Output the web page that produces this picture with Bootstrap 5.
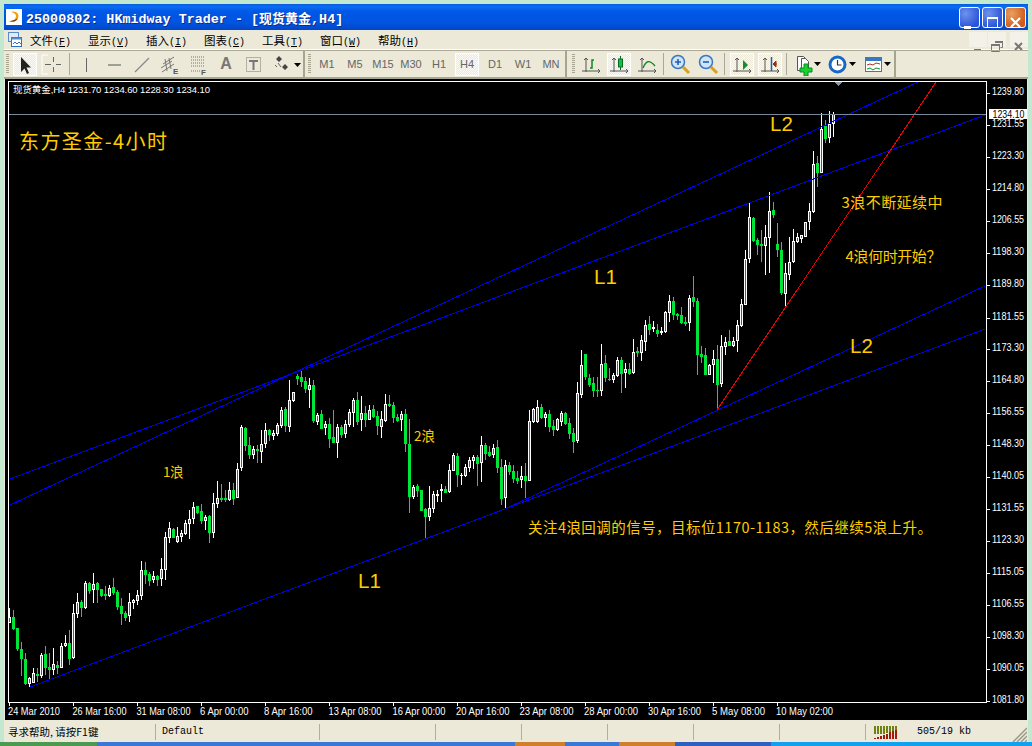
<!DOCTYPE html>
<html lang="zh">
<head>
    <meta charset="UTF-8">
    <meta name="viewport" content="width=device-width, initial-scale=1.0">
    <title>HKmidway Trader</title>
    <link href="https://cdn.jsdelivr.net/npm/bootstrap@5.3.0/dist/css/bootstrap.min.css" rel="stylesheet">
    <style>
        html, body { height: 746px; overflow: hidden; }
        body { background: #c3e8d0; font-family: "Noto Sans CJK SC", "Liberation Sans", sans-serif; color: #000; }
        .app-window { width: 1024px; height: 738px; margin: 4px 0 0 4px; background: #ece9d8; }
        .title-row { height: 26px; flex: none; padding: 0 2px; color: #fff; background: linear-gradient(#0a5ad8 0, #0a6cf4 10%, #0058e6 28%, #0054e0 72%, #0047c8 100%); }
        .title-text { margin-left: 4px; font: bold 13.4px "Liberation Mono", monospace; text-shadow: 1px 1px 0 #0a2f90; white-space: pre; }
        .title-text span { font: bold 13px "Noto Sans CJK SC", sans-serif; }
        .xp-btn { width: 21px; height: 21px; margin-left: 2px; border: 1px solid #fff; border-radius: 3px; background: radial-gradient(circle at 30% 30%, #6f92ec, #2a55d8 75%); }
        .xp-close { background: radial-gradient(circle at 30% 30%, #e8a060, #d05a18 75%); }
        .menu-row { height: 20px; flex: none; border-bottom: 1px solid #fff; }
        .menu-row .nav-link { padding: 0 8px; font-size: 11.5px; line-height: 20px; color: #000; width: 58px; white-space: nowrap; }
        .menu-row .nav-link b { font: 10px "Liberation Mono", monospace; }
        .mdi-btn { width: 18px; height: 15px; margin-left: 1px; background: #f4f2e8; }
        .tool-row { height: 29px; flex: none; padding-top: 1px; border-bottom: 2px solid #a6a694; box-shadow: inset 0 1px 0 #aca899; }
        .tool-grip { width: 3px; height: 20px; margin: 0 2px 0 3px; background: repeating-linear-gradient(#a8a690 0 1px, #ece9d8 1px 2px); }
        .tool-grip.first { margin-left: 2px; }
        .tool-grip.third { margin-left: 5px; }
        .tool-btn { width: 24px; height: 23px; margin: 0 2px; padding: 0; border: 0; border-radius: 0; font: 11px "Liberation Sans", sans-serif; color: #666; line-height: 23px; }
        .tool-btn svg { display: block; margin: 0 auto; }
        .tool-wide { width: 31px; }
        .tool-gap { margin-left: 3px; }
        .tool-on { background: #f6f5ee; box-shadow: inset 0 0 0 1px #fff; background-image: repeating-conic-gradient(#ece9d8 0 25%, #fbfaf5 0 50%); background-size: 2px 2px; }
        .tool-sep { width: 1px; height: 22px; margin: 0 2px; background: #aca899; }
        .tool-end { width: 2px; height: 26px; background: #a6a68f; }
        .tool-ltr { font: bold 16px "Liberation Sans", sans-serif; color: #777; }
        .chart-frame { flex: 1 1 auto; margin: 0 1px; background: #000; min-height: 0; }
        .chart-frame svg { display: block; }
        .chart-frame text { font-family: "Liberation Sans", sans-serif; fill: #fff; }
        .chart-frame text.note-text, .chart-frame tspan.note-text { font-family: "Noto Sans CJK SC", sans-serif; fill: #ffcc00; }
        .chart-frame tspan.info-cjk { font-family: "Noto Sans CJK SC", sans-serif; }
        .chart-frame text.big-label { fill: #ffcc00; font-size: 20.5px; }
        .tick-text { font-size: 10.5px; }
        .status-row { height: 22px; flex: none; padding-top: 2px; font-size: 10.5px; }
        .status-cell { height: 16px; line-height: 16px; border-right: 1px solid #aeb09c; padding-left: 4px; white-space: nowrap; flex: none; }
        .status-mono { font: 10px/16px "Liberation Mono", monospace; }
        .strip-row { height: 4px; position: fixed; left: 0; right: 0; bottom: 0; background: #3a78d8; }
        .strip-row div { height: 4px; flex: none; }
    </style>
</head>
<body>
    <div class="app-window d-flex flex-column">

        <!-- title bar -->
        <div class="title-row d-flex align-items-center">
            <svg width="16" height="16" viewBox="0 0 16 16">
                <rect width="16" height="16" fill="#fff"/>
                <path d="M4 3C10 1 14 5 12 9 11 12 7 14 3 12 7 12 10 10 10 7 10 5 7 3 4 3Z" fill="#f0a010"/>
                <path d="M3 12C7 14 11 12 12 9 11 10 7 12 3 12Z" fill="#704010"/>
            </svg>
            <div class="title-text">25000802: HKmidway Trader - [<span>现货黄金</span>,H4]</div>
            <div class="ms-auto d-flex">
                <div class="xp-btn"><svg width="19" height="19"><rect x="4" y="13" width="7" height="3" fill="#fff"/></svg></div>
                <div class="xp-btn"><svg width="19" height="19"><path d="M4.5 5.5h10v9h-10z" fill="none" stroke="#fff"/><rect x="4" y="4" width="11" height="2" fill="#fff"/></svg></div>
                <div class="xp-btn xp-close"><svg width="19" height="19"><path d="M5 5l9 9M14 5l-9 9" stroke="#fff" stroke-width="2.2"/></svg></div>
            </div>
        </div>

        <!-- menu -->
        <div class="menu-row d-flex align-items-center">
            <svg class="ms-1 flex-none" width="14" height="15" viewBox="0 0 14 15">
                <rect x=".5" y=".5" width="10" height="9" fill="#dfe9f8" stroke="#5a8ac8"/>
                <rect x="3.5" y="5.5" width="10" height="9" fill="#fff" stroke="#3070c0"/>
                <rect x="3.5" y="5.5" width="10" height="2" fill="#5a8ac8"/>
                <path d="M5 12l2-2 2 2 2-2 2 2" fill="none" stroke="#3070c0"/>
            </svg>
            <ul class="nav flex-nowrap">
                <li class="nav-item"><a class="nav-link" href="#">文件<b>(<u>F</u>)</b></a></li>
                <li class="nav-item"><a class="nav-link" href="#">显示<b>(<u>V</u>)</b></a></li>
                <li class="nav-item"><a class="nav-link" href="#">插入<b>(<u>I</u>)</b></a></li>
                <li class="nav-item"><a class="nav-link" href="#">图表<b>(<u>C</u>)</b></a></li>
                <li class="nav-item"><a class="nav-link" href="#">工具<b>(<u>T</u>)</b></a></li>
                <li class="nav-item"><a class="nav-link" href="#">窗口<b>(<u>W</u>)</b></a></li>
                <li class="nav-item"><a class="nav-link" href="#">帮助<b>(<u>H</u>)</b></a></li>
            </ul>
            <div class="ms-auto d-flex">
                <div class="mdi-btn"><svg width="18" height="15"><rect x="5" y="10" width="7" height="2" fill="#777"/></svg></div>
                <div class="mdi-btn"><svg width="18" height="15"><path d="M7.5 2.5h7v6h-2M3.500 5.500h8v7h-8z" fill="none" stroke="#777"/><path d="M7 3h8M3 6h9" stroke="#777" stroke-width="2"/></svg></div>
                <div class="mdi-btn ms-1"><svg width="18" height="15"><path d="M5 4l7 7M12 4l-7 7" stroke="#777" stroke-width="2"/></svg></div>
            </div>
        </div>

        <!-- toolbars -->
        <div class="tool-row d-flex align-items-center">
            <div class="tool-grip first"></div>
            <button class="btn tool-btn tool-on"><svg width="24" height="23"><path d="M8 4V19L11.500 15.500 14 21 16 20 13.500 14.500H18Z" fill="#222"/></svg></button>
            <button class="btn tool-btn"><svg width="24" height="23"><path d="M1 2H7M1 2V21M1 21H7" fill="none" stroke="#fff"/><path d="M12.500 4V9M12.500 14V19M4 11.500H10M15 11.500H20" stroke="#666"/></svg></button>
            <div class="tool-sep"></div>
            <button class="btn tool-btn"><svg width="24" height="23"><path d="M12.500 5V19" stroke="#666"/></svg></button>
            <button class="btn tool-btn"><svg width="24" height="23"><path d="M6 12H19" stroke="#555"/></svg></button>
            <button class="btn tool-btn"><svg width="24" height="23"><path d="M5 19L19 5" stroke="#888" stroke-width="1.200"/></svg></button>
            <button class="btn tool-btn"><svg width="24" height="23"><path d="M3 15L14 8M4 19L16 11M5 11L16 4M7 6L9 18M11 5L13 16" stroke="#777" fill="none"/><text x="15" y="21" font-size="8" font-weight="bold" fill="#555" font-family="Liberation Sans">E</text></svg></button>
            <button class="btn tool-btn"><svg width="24" height="23"><path d="M5 4H18M5 7H18M5 10H18M5 13H18M5 18H14" stroke="#777" stroke-dasharray="1 1"/><text x="15" y="22" font-size="8" font-weight="bold" fill="#555" font-family="Liberation Sans">F</text></svg></button>
            <button class="btn tool-btn tool-ltr">A</button>
            <button class="btn tool-btn"><svg width="24" height="23"><path d="M4.500 4.500h14v14h-14z" fill="none" stroke="#777" stroke-dasharray="1 1"/><path d="M7 7h9v2h-3.500V17h-2V9H7z" fill="#777"/></svg></button>
            <button class="btn tool-btn tool-wide"><svg width="31" height="23"><path d="M6 6l3-3 3 3-3 3zM12 14l3-3 3 3-3 3z" fill="#444"/><path d="M8 10l3 4M5 12l2 2" stroke="#666"/><path d="M24 10h7l-3.500 4z" fill="#000"/></svg></button>
            <div class="tool-end"></div>

            <div class="tool-grip"></div>
            <button class="btn tool-btn">M1</button>
            <button class="btn tool-btn">M5</button>
            <button class="btn tool-btn">M15</button>
            <button class="btn tool-btn">M30</button>
            <button class="btn tool-btn">H1</button>
            <button class="btn tool-btn tool-on">H4</button>
            <button class="btn tool-btn">D1</button>
            <button class="btn tool-btn">W1</button>
            <button class="btn tool-btn">MN</button>
            <div class="tool-end"></div>

            <div class="tool-grip third"></div>
            <button class="btn tool-btn"><svg width="24" height="23"><path d="M7 5V19M3 18H21M5 7l2-2 2 2M19 16l2 2-2 2" fill="none" stroke="#555"/><path d="M11 15h2V7h2" fill="none" stroke="#0a8a20" stroke-width="1.500"/></svg></button>
            <button class="btn tool-btn tool-on"><svg width="24" height="23"><path d="M7 5V19M3 18H21M5 7l2-2 2 2M19 16l2 2-2 2" fill="none" stroke="#555"/><path d="M13.500 3V17" stroke="#0a6a20"/><rect x="11.500" y="6" width="4" height="8" fill="#10c040" stroke="#0a6a20"/></svg></button>
            <button class="btn tool-btn"><svg width="24" height="23"><path d="M7 5V19M3 18H21M5 7l2-2 2 2M19 16l2 2-2 2" fill="none" stroke="#555"/><path d="M8 15C11 8 14 6 20 13" fill="none" stroke="#0a8a20" stroke-width="1.300"/></svg></button>
            <div class="tool-sep"></div>
            <button class="btn tool-btn"><svg width="24" height="23"><circle cx="10" cy="9" r="6.500" fill="#cfe4f8" stroke="#3878c0" stroke-width="1.500"/><path d="M7 9h6M10 6v6" stroke="#2060b0" stroke-width="1.600"/><path d="M15 14l6 6" stroke="#d8a020" stroke-width="3"/></svg></button>
            <button class="btn tool-btn"><svg width="24" height="23"><circle cx="10" cy="9" r="6.500" fill="#cfe4f8" stroke="#3878c0" stroke-width="1.500"/><path d="M7 9h6" stroke="#2060b0" stroke-width="1.600"/><path d="M15 14l6 6" stroke="#d8a020" stroke-width="3"/></svg></button>
            <div class="tool-sep"></div>
            <button class="btn tool-btn tool-on tool-gap"><svg width="24" height="23"><path d="M7 5V19M3 18H21M5 7l2-2 2 2M19 16l2 2-2 2" fill="none" stroke="#555"/><path d="M13 7l5 5-5 5z" fill="#109030"/></svg></button>
            <button class="btn tool-btn tool-on"><svg width="24" height="23"><path d="M7 5V19M3 18H21M5 7l2-2 2 2M19 16l2 2-2 2" fill="none" stroke="#555"/><path d="M13.500 4V18" stroke="#1060b0" stroke-width="1.500"/><path d="M15 11h4M15 11l3-3v6z" fill="#a03010" stroke="#a03010"/></svg></button>
            <div class="tool-sep"></div>
            <button class="btn tool-btn tool-wide"><svg width="31" height="23"><path d="M6.500 3.500h6l3 3v11h-9z" fill="#fff" stroke="#555"/><path d="M10.500 5.500h4l3 3v7h-7z" fill="#fff" stroke="#555"/><path d="M13 11h4v4h4v4h-4v4h-4v-4H9v-4h4z" fill="#18d030" stroke="#0a8a20"/><path d="M23 9h7l-3.500 4z" fill="#000"/></svg></button>
            <button class="btn tool-btn tool-wide"><svg width="31" height="23"><circle cx="11.500" cy="11.500" r="7.500" fill="#fff" stroke="#1868c8" stroke-width="3"/><path d="M11.500 7v5h4" fill="none" stroke="#333" stroke-width="1.200"/><path d="M23 9h7l-3.500 4z" fill="#000"/></svg></button>
            <button class="btn tool-btn tool-wide"><svg width="31" height="23"><rect x="4.500" y="4.500" width="16" height="14" fill="#fff" stroke="#3878c0"/><rect x="5" y="5" width="15" height="3" fill="#3878c0"/><path d="M6 12l3-1 3 1 3-2 4 1" fill="none" stroke="#b03020"/><path d="M6 16l3-1 3 2 3-2 4 1" fill="none" stroke="#109030"/><path d="M23 9h7l-3.500 4z" fill="#000"/></svg></button>
            <div class="tool-end"></div>
        </div>

        <!-- chart -->
        <div class="chart-frame">
            <svg id="chart" width="1027" height="641" viewBox="5 79 1027 641" shape-rendering="crispEdges">
                <g id="candles"></g>
                <g fill="none" stroke="#0000f0">
                    <line x1="10" y1="479" x2="985" y2="115"/>
                    <line x1="10" y1="505" x2="918" y2="82"/>
                    <line x1="30" y1="687" x2="985" y2="329"/>
                    <line x1="507" y1="508" x2="985" y2="286"/>
                </g>
                <line x1="717" y1="410" x2="936" y2="82" stroke="#f00000"/>
                <rect x="9" y="114" width="977" height="1" fill="#778899"/>
                <path d="M834 81.500h9l-4.500 5z" fill="#8a96a6"/>
                <path d="M8.500 703V81.500H986.500V702.500H8" fill="none" stroke="#fff"/>
                <g id="axes"></g>

                <text x="13" y="93" font-size="9.500" textLength="197" lengthAdjust="spacing"><tspan class="info-cjk">现货黄金</tspan>,H4  1231.70 1234.60 1228.30 1234.10</text>
                <text class="note-text" x="19" y="149" font-size="20" textLength="148">东方圣金-4小时</text>
                <text class="big-label" x="770" y="131">L2</text>
                <text class="big-label" x="594" y="284">L1</text>
                <text class="big-label" x="358" y="588">L1</text>
                <text class="big-label" x="850" y="353">L2</text>
                <text class="note-text" x="163" y="477" font-size="13.500" textLength="20.500">1浪</text>
                <text class="note-text" x="414" y="441" font-size="13.500" textLength="21">2浪</text>
                <text class="note-text" x="528" y="533" font-size="14.500" textLength="404">关注4浪回调的信号，目标位1170-1183，然后继续5浪上升。</text>
                <text class="note-text" x="841.500" y="208" font-size="15" textLength="101">3浪不断延续中</text>
                <text class="note-text" x="845.500" y="262" font-size="15" textLength="96">4浪何时开始？</text>
            </svg>
        </div>

        <!-- status bar -->
        <div class="status-row d-flex align-items-center">
            <div class="status-cell" style="width:152px">寻求帮助, 请按F1键</div>
            <div class="status-cell status-mono" style="width:164px;padding-left:6px">Default</div>
            <div class="status-cell" style="width:116px"></div>
            <div class="status-cell" style="width:86px"></div>
            <div class="status-cell" style="width:86px"></div>
            <div class="status-cell" style="width:86px"></div>
            <div class="status-cell" style="width:86px"></div>
            <div class="status-cell" style="width:86px"></div>
            <svg id="conn" class="ms-2" width="25" height="13"></svg>
            <div class="status-mono ms-auto" style="margin-right:57px">505/19 kb</div>
            <svg class="position-absolute" style="right:5px;bottom:4px" width="15" height="15"><path d="M15 1L1 15M15 5L5 15M15 9L9 15M15 13L13 15" stroke="#9a9a8a" stroke-width="1.500"/></svg>
        </div>
    </div>

    <!-- taskbar edge below the window -->
    <div class="strip-row d-flex">
        <div style="width:97px;background:#4a9a50"></div>
        <div style="width:418px"></div>
        <div style="width:50px;background:#d0802a"></div>
        <div style="width:54px"></div>
        <div style="width:56px;background:#d0802a"></div>
        <div style="width:96px;background:#2e60c0"></div>
        <div class="flex-grow-1" style="background:#12a0f0"></div>
    </div>

    <script src="https://cdn.jsdelivr.net/npm/bootstrap@5.3.0/dist/js/bootstrap.bundle.min.js"></script>
    <script>
        // [high, body top, body bottom, low, 1 = up candle] read off the picture, y in thirds of a pixel below y0
        const blocks = [
            { y0: 400, rows: [
                [625,652,668,670,1],[630,652,686,690,0],[684,685,747,752,0],[727,748,777,828,0],[760,778,852,855,0],[830,835,851,860,1],
                [805,820,848,850,1],[805,822,828,845,0],[760,766,827,835,1],[738,762,804,825,0],[758,801,810,838,0],[744,793,809,825,1],
                [783,796,803,822,0],[730,739,803,804,1],[705,730,738,740,1],[690,730,777,795,0],[612,640,774,776,1],[580,606,641,654,1],
                [600,606,623,650,0],[544,549,623,627,1],[545,550,573,582,0],[519,552,570,610,1],[545,550,570,608,0],[567,568,588,592,0],
                [558,583,588,600,0],[556,564,588,592,1],[534,561,580,585,0],[570,576,621,630,0],[595,618,642,675,0],[633,640,654,662,0],
                [580,607,648,665,1],[597,601,608,627,1],[571,586,602,615,1],[484,511,587,600,1],[487,511,525,552,0],[516,522,543,558,0],
                [513,529,540,550,1],[525,528,540,557,0],[475,508,537,557,1],[396,412,509,540,1],[366,385,413,428,1],[384,387,413,415,0],
                [380,408,425,428,1],[390,400,410,425,1],[360,370,401,405,1],[330,358,372,417,1],[307,322,356,372,1],[318,319,338,343,0],
                [312,334,362,372,0],[345,351,362,390,1],[346,348,398,428,0],[280,310,398,415,1],[243,295,311,324,1],[252,294,300,305,0],
                [270,294,299,305,0],[247,271,299,302,1],[250,271,297,315,0],[190,206,293,295,1],[75,82,204,212,1],[82,84,138,153,0],
                [110,136,164,178,0],[138,148,164,176,1],[135,148,152,188,0],[90,133,155,188,1],[70,90,132,143,1],[87,90,105,122,0]
            ] },
            { y0: 360, rows: [
                [210,218,228,240,1],[190,196,222,228,1],[142,150,198,205,1],[142,147,198,215,0],[60,120,200,215,1],[95,97,122,125,1],
                [42,47,56,75,0],[33,51,66,80,0],[50,64,88,100,0],[55,75,90,145,1],[60,75,183,188,0],[158,165,186,195,1],
                [150,162,206,208,0],[182,191,204,225,1],[175,192,237,265,0]
            ] },
            { y0: 340, rows: [
                [210,292,308,310,0],[253,261,308,354,1],[255,261,285,295,0],[240,252,281,293,1],[208,216,255,260,1],[175,181,219,262,1],
                [155,180,246,255,0],[168,220,240,272,1],[198,220,240,262,0],[195,210,239,240,1],[195,208,232,235,0],[213,228,258,285,0],
                [213,237,261,293,1],[163,193,243,247,1],[165,193,197,200,0],[185,196,234,250,0],[222,232,243,245,0],[213,222,240,273,1],
                [207,222,312,335,0],[237,312,470,520,0],[435,442,472,476,1],[432,438,452,470,0],[450,450,512,512,0],[505,507,530,595,0],
                [438,504,530,542,1],[452,462,506,518,1],[450,462,467,485,1],[433,448,452,485,1],[438,447,458,460,0],[372,390,456,460,1],
                [340,345,392,393,1],[340,348,406,440,0],[400,404,407,434,1],[372,381,407,412,1],[350,360,384,395,1],[345,351,362,387,1],
                [345,351,372,438,0],[289,316,368,425,1],[310,316,342,360,0],[318,336,347,350,0],[312,324,345,353,1],[300,322,384,400,0],
                [358,381,476,495,0],[360,376,473,505,1],[367,376,396,405,0],[375,394,417,430,0],[393,414,424,432,0],[378,408,420,445,1],
                [370,408,422,473,0],[210,244,422,423,1],[205,206,247,250,1],[181,202,246,248,1],[192,202,234,238,0],[215,222,234,262,1],
                [210,222,262,275,0],[240,258,270,288,0],[235,238,270,273,1],[213,220,246,258,1],[215,219,252,255,0],[235,250,282,298,0],
                [265,279,305,338,0],[127,160,303,310,1],[30,76,164,175,1],[42,42,112,120,0],[102,115,135,140,0],[110,130,153,170,0],
                [110,150,153,172,0],[12,72,152,168,1],[45,70,115,125,0],[85,117,121,122,0],[98,106,120,128,1],[50,60,107,112,1],
                [52,60,102,158,0],[68,88,100,145,1],[70,88,102,105,0],[-3,37,100,102,1]
            ] },
            { y0: 285, rows: [
                [185,197,204,215,0],[150,165,205,228,1],[105,120,170,198,1],[94,118,135,150,0],[108,126,132,142,1],[118,135,147,155,0]
            ] },
            { y0: 100, rows: [
                [680,693,700,705,1],[632,636,696,700,1],[585,603,638,665,1],[590,603,645,660,0],[638,642,648,660,0],[620,645,669,672,0],
                [650,666,672,678,0],[585,594,668,693,1],[528,591,605,620,0],[595,603,765,825,0],[738,762,772,790,0],[745,765,824,825,0],
                [792,795,824,825,1],[750,777,796,850,1],[735,777,855,930,0],[705,738,852,860,1],[710,726,742,765,1],[690,722,738,738,0],
                [710,722,738,740,1],[660,676,722,755,1],[597,612,677,680,1],[450,478,614,615,1],[310,351,478,490,1],[350,354,422,425,0],
                [415,420,435,465,0],[390,432,438,485,0],[375,411,437,525,1],[276,333,415,520,1],[305,330,345,355,0],[370,432,450,470,0],
                [425,450,580,585,0],[490,520,582,625,1],[410,487,524,540,1],[388,423,487,490,1],[400,411,427,430,1],[405,405,416,428,1],
                [365,367,410,412,1],[310,333,367,390,1],[153,192,335,338,1],[168,190,218,260,0],[38,87,218,220,1],[60,78,118,130,0],
                [33,72,115,128,1],[35,42,72,110,1]
            ] }
        ];

        const NS = 'http://www.w3.org/2000/svg';
        function addTo(parent, tag, attrs, content) {
            const el = document.createElementNS(NS, tag);
            Object.keys(attrs).forEach(k => el.setAttribute(k, attrs[k]));
            if (content) el.textContent = content;
            parent.appendChild(el);
            return el;
        }

        // candles, one every 4px from x=9
        const candleGroup = document.getElementById('candles');
        let index = 0;
        blocks.forEach(block => {
            block.rows.forEach(row => {
                const [high, top, bottom, low, up] = row.slice(0, 4).map(v => Math.round(block.y0 + v / 3)).concat(row[4]);
                const x = 9 + 4 * index++;
                const color = up ? '#fff' : '#00e636';
                addTo(candleGroup, 'rect', { x: x, y: high, width: 1, height: Math.max(low - high, 1), fill: color });
                addTo(candleGroup, 'rect', { x: x - 1, y: top, width: 3, height: Math.max(bottom - top, 1), fill: color });
                if (up && bottom - top > 2) {
                    addTo(candleGroup, 'rect', { x: x, y: top + 1, width: 1, height: bottom - top - 2, fill: '#d4127f' });
                }
            });
        });

        // axes
        const axes = document.getElementById('axes');
        const prices = ['1239.80','1231.55','1223.30','1214.80','1206.55','1198.30','1189.80','1181.55','1173.30','1164.80',
                        '1156.55','1148.30','1140.05','1131.55','1123.30','1115.05','1106.55','1098.30','1090.05','1081.80'];
        const priceY = [91,123,155,187,219,251,283,316,347,379,411,443,475,507,539,571,603,635,667,699];
        prices.forEach((p, i) => {
            addTo(axes, 'rect', { x: 987, y: priceY[i] + 2, width: 3, height: 1, fill: '#fff' });
            addTo(axes, 'text', { x: 992, y: priceY[i] + 4, class: 'tick-text', textLength: 32, lengthAdjust: 'spacingAndGlyphs' }, p);
        });
        const times = [['24 Mar 2010',8,52],['26 Mar 16:00',72.5,54],['31 Mar 08:00',136.5,54],['6 Apr 00:00',200,48.5],['8 Apr 16:00',264,48.5],
                       ['13 Apr 08:00',328.5,53],['16 Apr 00:00',392.5,53],['20 Apr 16:00',456,53.5],['23 Apr 08:00',519.5,54],['28 Apr 00:00',584,54],
                       ['30 Apr 16:00',648,53],['5 May 08:00',712,53],['10 May 02:00',776,57]];
        times.forEach((t, i) => {
            addTo(axes, 'rect', { x: 9 + 64 * i, y: 703, width: 1, height: 3, fill: '#fff' });
            addTo(axes, 'text', { x: t[1], y: 715, class: 'tick-text', textLength: t[2], lengthAdjust: 'spacingAndGlyphs' }, t[0]);
        });
        addTo(axes, 'rect', { x: 989, y: 109, width: 38, height: 10, fill: '#fff' });
        addTo(axes, 'text', { x: 992.5, y: 118, class: 'tick-text', textLength: 32, lengthAdjust: 'spacingAndGlyphs', style: 'fill:#000' }, '1234.10');

        // connection bars in the status bar
        const conn = document.getElementById('conn');
        for (let i = 0; i < 8; i++) {
            const red = [1, 2, 3, 4, 5, 7, 8, 9][i];
            addTo(conn, 'rect', { x: i * 3, y: 0, width: 2, height: 8 - (i > 3 ? i - 3 : 0), fill: '#6f8210' });
            addTo(conn, 'rect', { x: i * 3, y: 13 - red, width: 2, height: red, fill: '#a01c08' });
        }
    </script>
</body>
</html>
